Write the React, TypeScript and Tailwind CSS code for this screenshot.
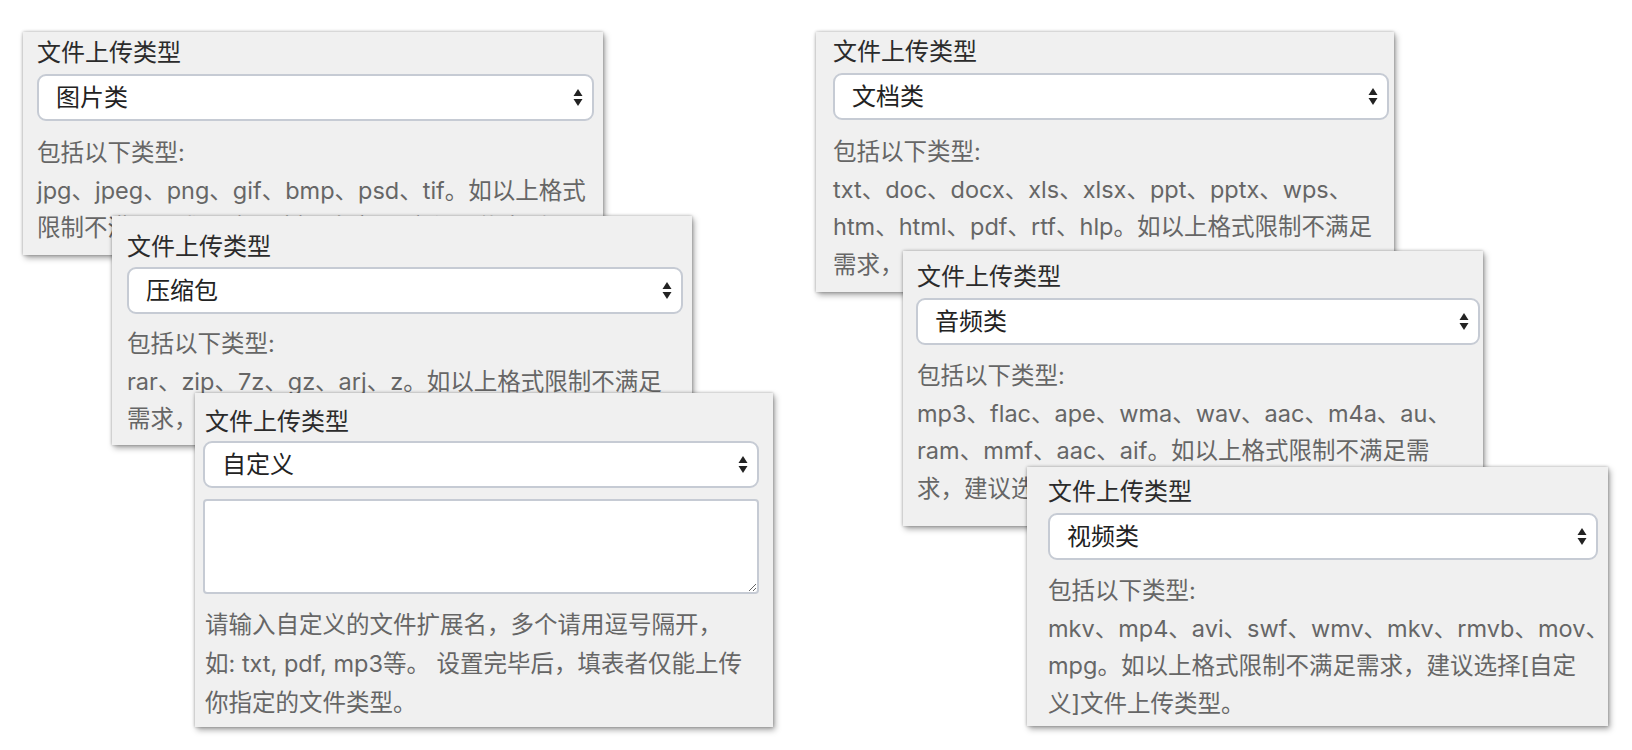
import React from "react";

const Arrows = () => (
  <svg width="10" height="19" viewBox="0 0 10 19" className="shrink-0">
    <path d="M5 1 L9.5 8 L0.5 8 Z" fill="#222" />
    <path d="M0.5 11 L9.5 11 L5 18 Z" fill="#222" />
  </svg>
);

const Label = () => (
  <div className="text-[24px] leading-[32px] text-[#2b2b2b] whitespace-nowrap">文件上传类型</div>
);

const Select = ({ text }: { text: string }) => (
  <div className="h-[47px] bg-white border-2 border-[#c6cbd4] rounded-[9px] flex items-center justify-between pl-[17px] pr-[9px]">
    <span className="text-[24px] text-[#222] whitespace-nowrap">{text}</span>
    <Arrows />
  </div>
);

const Desc = ({ lines }: { lines: string[] }) => (
  <div className="text-[#666] text-[23.5px] leading-[37.5px]">
    <div className="whitespace-nowrap">包括以下类型:</div>
    {lines.map((l, i) => (
      <div key={i} className="whitespace-nowrap">
        {l}
      </div>
    ))}
  </div>
);

const shadow = "shadow-[0_0_3px_rgba(0,0,0,0.3),2px_3px_6px_rgba(0,0,0,0.35)]";

export default function App() {
  return (
    <div className="relative w-[1632px] h-[750px] bg-white overflow-hidden [font-family:Inter,'Noto_Sans_CJK_SC',sans-serif]">
      {/* Panel 1: 图片类 */}
      <div className={`absolute left-[23px] top-[32px] w-[580px] h-[223px] bg-[#f0f0f0] overflow-hidden pl-[14px] pr-[9px] pt-[5px] ${shadow}`}>
        <Label />
        <div className="mt-[5px]">
          <Select text="图片类" />
        </div>
        <div className="mt-[13px]">
          <Desc
            lines={[
              "jpg、jpeg、png、gif、bmp、psd、tif。如以上格式",
              "限制不满足需求，建议选择[自定义]文件上传类型。",
            ]}
          />
        </div>
      </div>

      {/* Panel 2: 压缩包 */}
      <div className={`absolute left-[112px] top-[216px] w-[580px] h-[229px] bg-[#f0f0f0] overflow-hidden pl-[15px] pr-[9px] pt-[15px] ${shadow}`}>
        <Label />
        <div className="mt-[4px]">
          <Select text="压缩包" />
        </div>
        <div className="mt-[11px]">
          <Desc
            lines={[
              "rar、zip、7z、gz、arj、z。如以上格式限制不满足",
              "需求，建议选择[自定义]文件上传类型。",
            ]}
          />
        </div>
      </div>

      {/* Panel 3: 自定义 */}
      <div className={`absolute left-[195px] top-[393px] w-[578px] h-[334px] bg-[#f0f0f0] overflow-hidden pl-[8px] pr-[14px] pt-[13px] ${shadow}`}>
        <div className="pl-[2px]">
          <Label />
        </div>
        <div className="mt-[3px]">
          <Select text="自定义" />
        </div>
        <textarea
          readOnly
          className="mt-[11px] block w-full h-[95px] bg-white border-2 border-[#c6cbd4] rounded-[4px] outline-none"
        />
        <div className="mt-[11px] pl-[2px] text-[#666] text-[23.5px] leading-[39px]">
          <div className="whitespace-nowrap">请输入自定义的文件扩展名，多个请用逗号隔开，</div>
          <div className="whitespace-nowrap">如: txt, pdf, mp3等。 设置完毕后，填表者仅能上传</div>
          <div className="whitespace-nowrap">你指定的文件类型。</div>
        </div>
      </div>

      {/* Panel 4: 文档类 */}
      <div className={`absolute left-[816px] top-[32px] w-[578px] h-[260px] bg-[#f0f0f0] overflow-hidden pl-[17px] pr-[5px] pt-[4px] ${shadow}`}>
        <Label />
        <div className="mt-[5px]">
          <Select text="文档类" />
        </div>
        <div className="mt-[13px]">
          <Desc
            lines={[
              "txt、doc、docx、xls、xlsx、ppt、pptx、wps、",
              "htm、html、pdf、rtf、hlp。如以上格式限制不满足",
              "需求，建议选择[自定义]文件上传类型。",
            ]}
          />
        </div>
      </div>

      {/* Panel 5: 音频类 */}
      <div className={`absolute left-[903px] top-[251px] w-[580px] h-[275px] bg-[#f0f0f0] overflow-hidden pl-[13px] pr-[3px] pt-[10px] ${shadow}`}>
        <div className="pl-[1px]">
          <Label />
        </div>
        <div className="mt-[5px]">
          <Select text="音频类" />
        </div>
        <div className="mt-[12px] pl-[1px]">
          <Desc
            lines={[
              "mp3、flac、ape、wma、wav、aac、m4a、au、",
              "ram、mmf、aac、aif。如以上格式限制不满足需",
              "求，建议选择[自定义]文件上传类型。",
            ]}
          />
        </div>
      </div>

      {/* Panel 6: 视频类 */}
      <div className={`absolute left-[1027px] top-[467px] w-[581px] h-[259px] bg-[#f0f0f0] overflow-hidden pl-[21px] pr-[10px] pt-[9px] ${shadow}`}>
        <Label />
        <div className="mt-[5px]">
          <Select text="视频类" />
        </div>
        <div className="mt-[12px]">
          <Desc
            lines={[
              "mkv、mp4、avi、swf、wmv、mkv、rmvb、mov、",
              "mpg。如以上格式限制不满足需求，建议选择[自定",
              "义]文件上传类型。",
            ]}
          />
        </div>
      </div>
    </div>
  );
}
